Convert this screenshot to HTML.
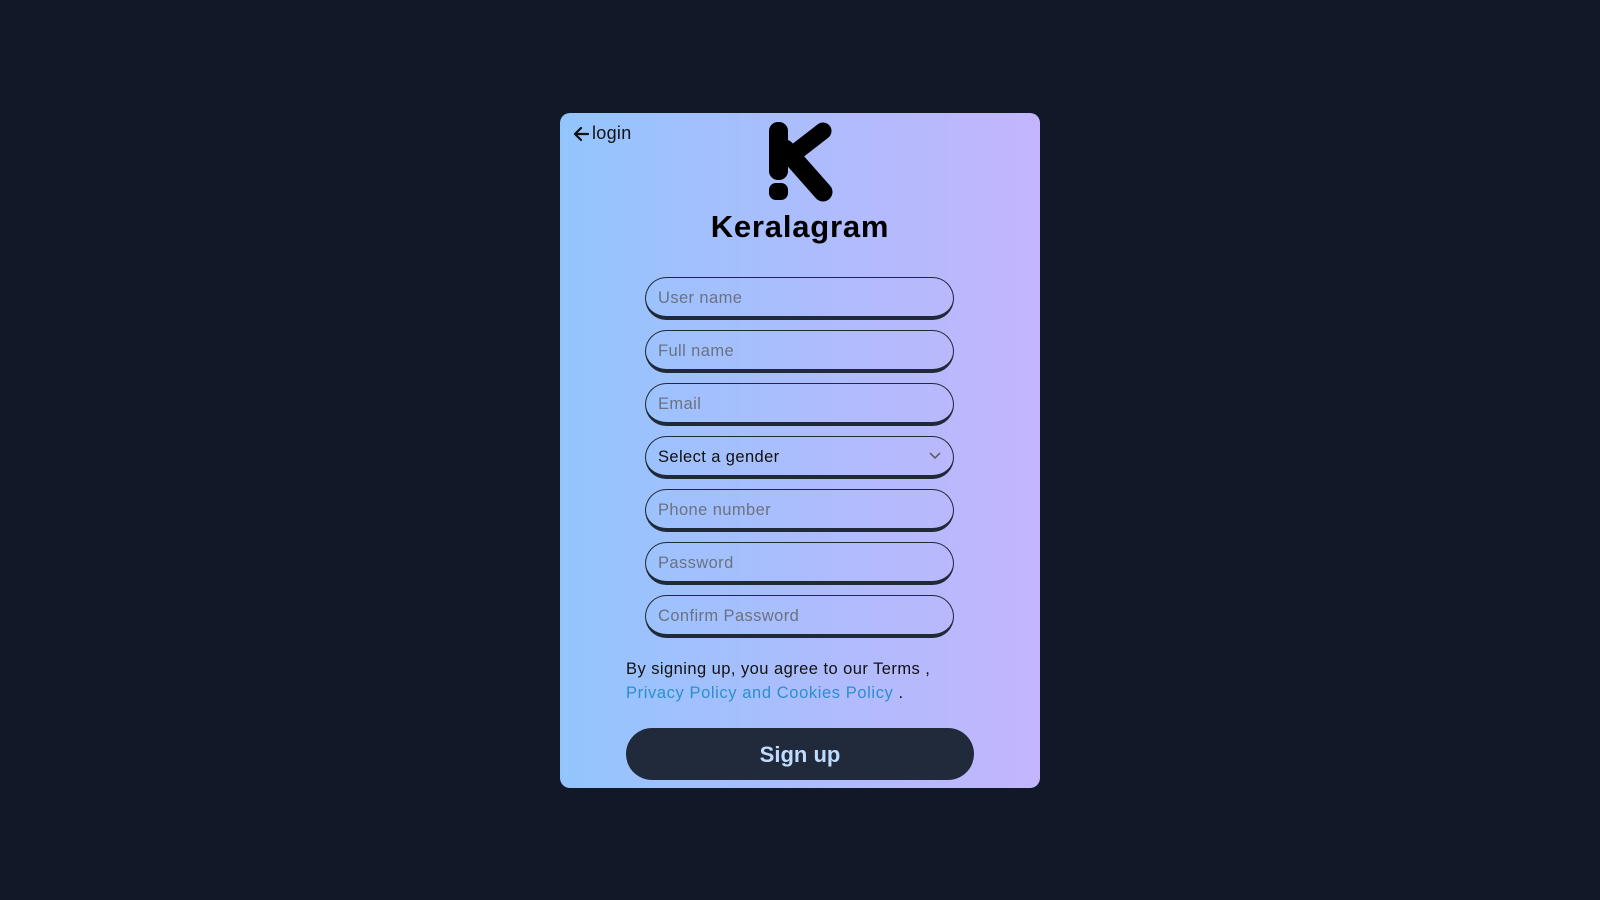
<!DOCTYPE html>
<html><head><meta charset="utf-8"><style>
*{box-sizing:border-box;margin:0;padding:0}
body{width:1600px;height:900px;background:#111827;font-family:"Liberation Sans",sans-serif;position:relative;overflow:hidden}
.card{position:absolute;left:560px;top:113px;width:480px;height:675px;border-radius:10px;background:linear-gradient(90deg,#93c5fd,#c4b5fd)}
.back{position:absolute;left:12px;top:10px;font-size:18px;color:#111;display:flex;align-items:center;gap:2px;letter-spacing:0.3px}
.title{position:absolute;left:0;width:100%;top:96px;text-align:center;font-size:31px;font-weight:bold;color:#000;letter-spacing:0.8px}
.inp{position:absolute;left:85px;width:309px;height:43px;border:1px solid #1f2937;border-bottom:4px solid #1f2937;border-radius:22px;font-size:16.5px;color:#6b7280;padding:11px 0 0 12px;letter-spacing:0.4px}
.terms{position:absolute;left:66px;top:544px;font-size:16.5px;line-height:24px;color:#111;letter-spacing:0.45px}
.terms a{color:#2b8fcf;text-decoration:none;letter-spacing:0.6px}
.btn{position:absolute;left:66px;top:615px;width:348px;height:52px;border-radius:26px;background:#212a3a;color:#bfdbfe;font-size:22px;font-weight:bold;text-align:center;line-height:54px}
</style></head><body>
<div class="card">
<div class="back"><svg width="18" height="16" viewBox="0 0 18 16"><path d="M16 8H3M9 2L3 8l6 6" stroke="#111" stroke-width="2.2" fill="none" stroke-linecap="round" stroke-linejoin="round"/></svg>login</div>
<svg style="position:absolute;left:205px;top:6px" width="70" height="84" viewBox="0 0 70 84">
<rect x="4" y="3" width="19" height="58" rx="9" fill="#000"/>
<rect x="4" y="64" width="19" height="17" rx="7" fill="#000"/>
<path d="M27 36 L58 12" stroke="#000" stroke-width="17" fill="none" stroke-linecap="round"/>
<path d="M20 30 L58 73" stroke="#000" stroke-width="19" stroke-linecap="round"/>
</svg>
<div class="title">Keralagram</div>
<div class="inp" style="top:164px">User name</div>
<div class="inp" style="top:217px">Full name</div>
<div class="inp" style="top:270px">Email</div>
<div class="inp" style="top:323px;color:#111">Select a gender<svg style="position:absolute;right:12px;top:15px" width="12" height="8" viewBox="0 0 12 8"><path d="M1 1l5 5 5-5" stroke="#555" stroke-width="1.5" fill="none"/></svg></div>
<div class="inp" style="top:376px">Phone number</div>
<div class="inp" style="top:429px">Password</div>
<div class="inp" style="top:482px">Confirm Password</div>
<div class="terms">By signing up, you agree to our Terms ,<br><a>Privacy Policy and Cookies Policy</a> .</div>
<div class="btn">Sign up</div>
</div>
</body></html>
